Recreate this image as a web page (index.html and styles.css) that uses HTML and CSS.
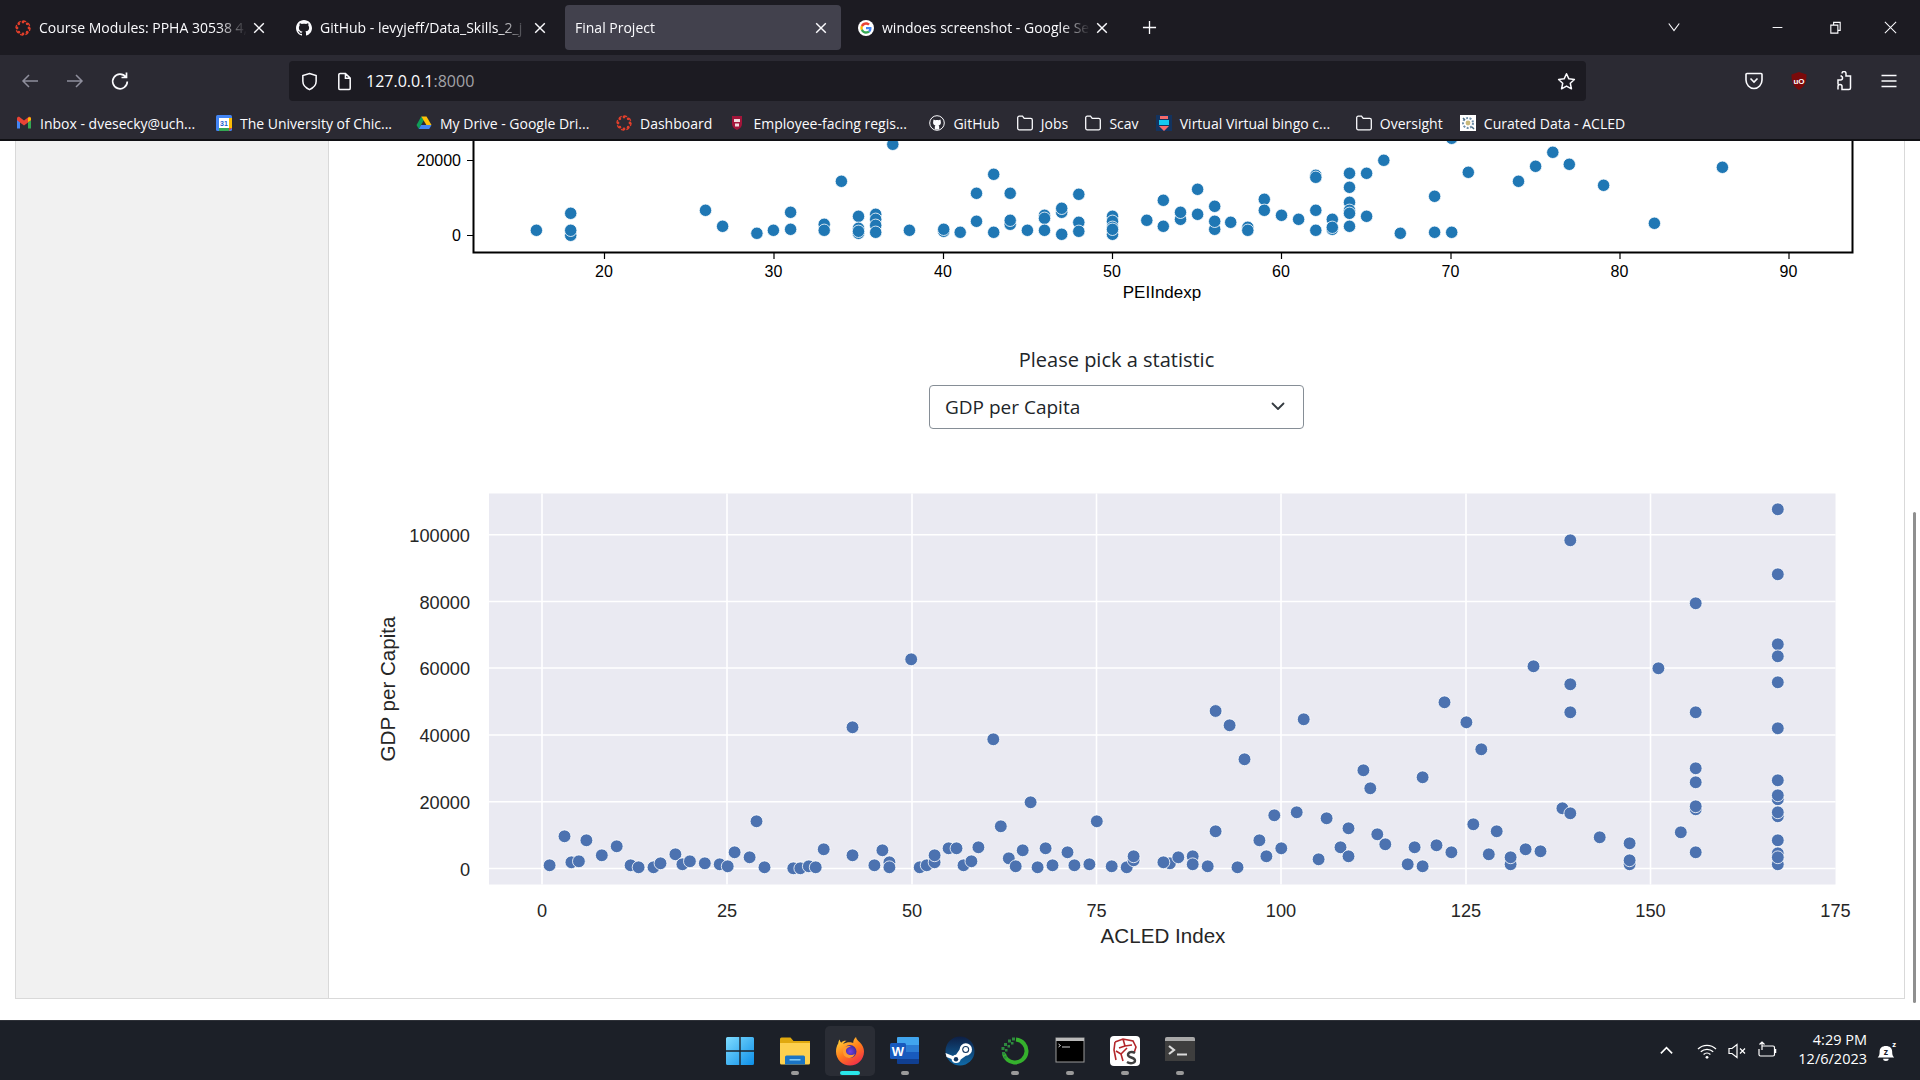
FILE: index.html
```html
<!DOCTYPE html>
<html lang="en">
<head>
<meta charset="utf-8">
<title>Final Project</title>
<link rel="stylesheet" href="styles.css">
</head>
<body>
<svg class="defs" width="0" height="0" aria-hidden="true">
  <defs>
    <symbol id="i-canvas" viewBox="0 0 16 16">
      <g fill="#e13f2b"><circle cx="8" cy="2" r="1.4"/><circle cx="8" cy="14" r="1.4"/><circle cx="2" cy="8" r="1.4"/><circle cx="14" cy="8" r="1.4"/><circle cx="3.800" cy="3.800" r="1.400"/><circle cx="12.200" cy="3.800" r="1.400"/><circle cx="3.800" cy="12.200" r="1.400"/><circle cx="12.200" cy="12.200" r="1.400"/></g>
      <circle cx="8" cy="8" r="7" fill="none" stroke="#e13f2b" stroke-width="1.300" stroke-dasharray="3 2.500"/>
    </symbol>
    <symbol id="i-github" viewBox="0 0 16 16">
      <path fill="#fbfbfe" d="M8 0C3.600 0 0 3.600 0 8c0 3.500 2.300 6.500 5.500 7.600.4.100.5-.2.5-.4v-1.400c-2.200.5-2.700-1-2.700-1-.4-.9-.9-1.200-.9-1.200-.7-.5.100-.5.100-.5.800.1 1.200.8 1.200.8.700 1.200 1.900.9 2.300.7.100-.5.300-.9.500-1.100-1.800-.2-3.600-.9-3.600-4 0-.9.300-1.600.8-2.100-.1-.2-.4-1 .1-2.100 0 0 .7-.2 2.200.8.600-.2 1.300-.3 2-.3s1.400.1 2 .3c1.500-1 2.200-.8 2.200-.8.400 1.100.2 1.900.1 2.100.5.600.8 1.300.8 2.100 0 3.100-1.900 3.700-3.700 3.900.3.300.6.800.6 1.500v2.200c0 .2.100.5.600.4C13.700 14.500 16 11.500 16 8c0-4.400-3.600-8-8-8z"/>
    </symbol>
    <symbol id="i-google" viewBox="0 0 48 48">
      <circle cx="24" cy="24" r="24" fill="#fff"/>
      <path fill="#ea4335" d="M24 14c2.800 0 5 1 6.700 2.600l5-5C32.500 8.700 28.700 7 24 7 17.300 7 11.600 10.800 8.800 16.400l5.800 4.500C16 16.900 19.700 14 24 14z"/>
      <path fill="#4285f4" d="M40.500 24.500c0-1.200-.1-2.300-.3-3.500H24v6.600h9.300c-.4 2.200-1.600 4-3.400 5.200l5.600 4.300c3.200-3 5-7.400 5-12.600z"/>
      <path fill="#fbbc05" d="M14.600 27.100c-.4-1-.6-2-.6-3.100s.2-2.100.6-3.100l-5.800-4.500C7.700 18.700 7 21.300 7 24s.7 5.300 1.800 7.600z"/>
      <path fill="#34a853" d="M24 41c4.600 0 8.500-1.500 11.500-4.400l-5.600-4.300c-1.600 1-3.500 1.700-5.900 1.700-4.300 0-8-2.900-9.400-6.900l-5.800 4.500C11.600 37.200 17.300 41 24 41z"/>
    </symbol>
    <symbol id="i-x" viewBox="0 0 10 10"><path d="M1 1l8 8M9 1L1 9" fill="none" stroke="currentColor" stroke-width="1.200"/></symbol>
    <symbol id="i-folder" viewBox="0 0 16 16"><path d="M.7 2.700A1.500 1.500 0 0 1 2.200 1.200h3.300l1.700 2.200h6.600a1.500 1.500 0 0 1 1.500 1.500v8.400a1.500 1.500 0 0 1-1.500 1.500H2.200a1.500 1.500 0 0 1-1.500-1.500z" fill="none" stroke="#fbfbfe" stroke-width="1.300"/></symbol>
    <symbol id="i-gmail" viewBox="0 0 16 16">
      <path fill="#4285f4" d="M1 4v9.500h3V7z"/><path fill="#34a853" d="M12 7v6.500h3V4z"/><path fill="#ea4335" d="M1 3.500v1.800L8 10.500l7-5.200V3.500C15 2 13.300 1.300 12.200 2.200L8 5.400 3.800 2.200C2.700 1.300 1 2 1 3.500z"/><path fill="#fbbc05" d="M12 3v4l3-2V3.500C15 2.200 13.200 1.500 12 3z"/>
    </symbol>
    <symbol id="i-cal" viewBox="0 0 16 16">
      <rect x="0" y="0" width="16" height="16" rx="1.500" fill="#4285f4"/><rect x="3" y="3" width="10" height="10" fill="#fff"/><path fill="#34a853" d="M3 13h10v3H3z"/><path fill="#ea4335" d="M13 13h3l-3 3z"/><path fill="#fbbc05" d="M13 3h3v10h-3z"/>
      <text x="8" y="11" class="cal-num">31</text>
    </symbol>
    <symbol id="i-drive" viewBox="0 0 16 16">
      <path fill="#0f9d58" d="M5.500 1.500h-.2L.5 10l2.300 4 5-8.700z"/><path fill="#ffc107" d="M5.300 1.500h5.200l5 8.500h-5.100z"/><path fill="#4285f4" d="M2.800 14h10.400l2.300-4H5.100z"/>
    </symbol>
    <symbol id="i-shield-uc" viewBox="0 0 16 16">
      <path fill="#a3153a" d="M3 1h10v8c0 3-2.500 5-5 6-2.500-1-5-3-5-6z"/><path fill="#f2d9dd" d="M5 4h6v3H5zM6 8.500h4v3H6z"/>
    </symbol>
    <symbol id="i-github-ring" viewBox="0 0 16 16">
      <circle cx="8" cy="8" r="7.300" fill="none" stroke="#fbfbfe" stroke-width="1"/><path fill="#fbfbfe" d="M4.500 4.500l1.800.8c1-.3 2.400-.3 3.400 0l1.800-.8.300 2c.6 2.200-.6 3.600-2.200 3.900.5.400.6 1 .6 1.600v2.500H5.800V12c0-.6.100-1.200.6-1.600-1.600-.3-2.800-1.700-2.200-3.900z"/>
    </symbol>
    <symbol id="i-bingo" viewBox="0 0 16 16">
      <rect y="0" width="16" height="16" fill="#13335f"/><path fill="#f56a6a" d="M4 1h8v3H4zM3 11h10L8 16z"/><path fill="#14c8f2" d="M3 5h10v5H3z"/>
    </symbol>
    <symbol id="i-acled" viewBox="0 0 16 16">
      <rect width="16" height="16" fill="#fff"/><circle cx="8" cy="8" r="5" fill="none" stroke="#6f8fa8" stroke-width="2" stroke-dasharray="2 1.500"/><circle cx="8" cy="8" r="2.400" fill="#c9b97a"/><path d="M3 3l2 2M12 12l2 2" stroke="#4c6b80" stroke-width="1.500"/>
    </symbol>
  </defs>
</svg>

<header class="chrome">
  <div class="tabbar">
    <div class="tab">
      <svg class="fav"><use href="#i-canvas"/></svg>
      <span class="tab-title">Course Modules: PPHA 30538 4,</span>
      <svg class="tab-x"><use href="#i-x"/></svg>
    </div>
    <div class="tab">
      <svg class="fav"><use href="#i-github"/></svg>
      <span class="tab-title">GitHub - levyjeff/Data_Skills_2_j</span>
      <svg class="tab-x"><use href="#i-x"/></svg>
    </div>
    <div class="tab tab-active">
      <span class="tab-title">Final Project</span>
      <svg class="tab-x"><use href="#i-x"/></svg>
    </div>
    <div class="tab">
      <svg class="fav"><use href="#i-google"/></svg>
      <span class="tab-title">windoes screenshot - Google Se</span>
      <svg class="tab-x"><use href="#i-x"/></svg>
    </div>
    <svg class="newtab" viewBox="0 0 16 16"><path d="M8 1v14M1 8h14" fill="none" stroke="currentColor" stroke-width="1.400"/></svg>
    <div class="win-controls">
      <svg class="win-ico chevron-all" viewBox="0 0 16 16"><path d="M2 4l6 8 6-8" fill="none" stroke="currentColor" stroke-width="1.300"/></svg>
      <svg class="win-ico win-min" viewBox="0 0 16 16"><path d="M2 8h12" fill="none" stroke="currentColor" stroke-width="1.200"/></svg>
      <svg class="win-ico win-max" viewBox="0 0 16 16"><path d="M3 5.500h7.500V14H3zM6 5.500V2.500h7v8.500h-2.500" fill="none" stroke="currentColor" stroke-width="1.200"/></svg>
      <svg class="win-ico win-close" viewBox="0 0 16 16"><path d="M2 2l12 12M14 2L2 14" fill="none" stroke="currentColor" stroke-width="1.100"/></svg>
    </div>
  </div>

  <div class="navbar">
    <svg class="nav-ico nav-back" viewBox="0 0 20 20"><path d="M18 10H3M9 4l-6 6 6 6" fill="none" stroke="currentColor" stroke-width="1.500"/></svg>
    <svg class="nav-ico nav-fwd" viewBox="0 0 20 20"><path d="M2 10h15M11 4l6 6-6 6" fill="none" stroke="currentColor" stroke-width="1.500"/></svg>
    <svg class="nav-ico nav-reload" viewBox="0 0 20 20"><path d="M15.800 6A7.300 7.300 0 1 0 17.300 10.500M16.500 1.500V6.500H11.500" fill="none" stroke="currentColor" stroke-width="1.700"/></svg>
    <div class="urlbar">
      <svg class="url-ico" viewBox="0 0 20 20"><path d="M10 1.500l7 2.300v6c0 4-3 7-7 8.700-4-1.700-7-4.700-7-8.700v-6z" fill="none" stroke="currentColor" stroke-width="1.600"/></svg>
      <svg class="url-ico url-page" viewBox="0 0 20 20"><path d="M4 3a1.500 1.500 0 0 1 1.500-1.500H11l5 5V17a1.500 1.500 0 0 1-1.500 1.500h-9A1.500 1.500 0 0 1 4 17zM11 1.500V6.500h5" fill="none" stroke="currentColor" stroke-width="1.600"/></svg>
      <span class="url-text">127.0.0.1<span class="url-port">:8000</span></span>
      <svg class="url-ico url-star" viewBox="0 0 20 20"><path d="M10 1.800l2.500 5.400 5.800.7-4.300 4 1.200 5.800L10 14.800l-5.200 2.900L6 11.900l-4.300-4 5.800-.7z" fill="none" stroke="currentColor" stroke-width="1.600" stroke-linejoin="round"/></svg>
    </div>
    <div class="nav-tools">
      <svg class="nav-ico" viewBox="0 0 20 20"><path d="M3 2.500h14a1 1 0 0 1 1 1V9c0 4.500-3.600 8.500-8 8.500S2 13.500 2 9V3.500a1 1 0 0 1 1-1z" fill="none" stroke="currentColor" stroke-width="1.600"/><path d="M6.500 7.500L10 11l3.500-3.500" fill="none" stroke="currentColor" stroke-width="1.600"/></svg>
      <svg class="nav-ico" viewBox="0 0 20 20"><path d="M10 1l7.500 2.500c0 7-1.500 12-7.500 15.500C4 15.500 2.500 10.500 2.500 3.500z" fill="#7a0a0a"/><text x="10" y="12.500" class="ublock">uO</text></svg>
      <svg class="nav-ico" viewBox="0 0 20 20"><path d="M8 2.500a2 2 0 0 1 4 0V5h4.500v12a1.500 1.500 0 0 1-1.500 1.500H8V15.500a2 2 0 0 0-4 0M4 15.500V18.500M4 13.500V9h2.500a2 2 0 0 0 0-4H8" fill="none" stroke="currentColor" stroke-width="1.500"/></svg>
      <svg class="nav-ico" viewBox="0 0 20 20"><path d="M2.500 4.500h15M2.500 10h15M2.500 15.500h15" fill="none" stroke="currentColor" stroke-width="1.700"/></svg>
    </div>
  </div>

  <nav class="bookmarks">
    <a class="bm bm-wide"><svg class="fav"><use href="#i-gmail"/></svg>Inbox - dvesecky@uch...</a>
    <a class="bm bm-wide"><svg class="fav"><use href="#i-cal"/></svg>The University of Chic...</a>
    <a class="bm bm-wide"><svg class="fav"><use href="#i-drive"/></svg>My Drive - Google Dri...</a>
    <a class="bm"><svg class="fav"><use href="#i-canvas"/></svg>Dashboard</a>
    <a class="bm bm-wide"><svg class="fav"><use href="#i-shield-uc"/></svg>Employee-facing regis...</a>
    <a class="bm"><svg class="fav"><use href="#i-github-ring"/></svg>GitHub</a>
    <a class="bm"><svg class="fav"><use href="#i-folder"/></svg>Jobs</a>
    <a class="bm"><svg class="fav"><use href="#i-folder"/></svg>Scav</a>
    <a class="bm bm-wide"><svg class="fav"><use href="#i-bingo"/></svg>Virtual Virtual bingo c...</a>
    <a class="bm"><svg class="fav"><use href="#i-folder"/></svg>Oversight</a>
    <a class="bm"><svg class="fav"><use href="#i-acled"/></svg>Curated Data - ACLED</a>
  </nav>
</header>

<div class="viewport">
  <div class="app">
    <aside class="sidebar"></aside>
    <main class="main">
      <svg class="chart chart-top" viewBox="329 141 1575 175">
        <g id="dots-top" class="dots-top"></g>
        <path class="spine" d="M473.500 141V252.500H1852.500V141"/>
        <path class="tick" d="M467 160.500h6M467 235.500h6M604.500 253v6M774 253v6M943.500 253v6M1112.500 253v6M1281.500 253v6M1451 253v6M1620 253v6M1789 253v6"/>
        <g class="t-top t-end">
          <text x="461" y="166">20000</text>
          <text x="461" y="241">0</text>
        </g>
        <g class="t-top t-mid">
          <text x="604" y="277">20</text>
          <text x="773.500" y="277">30</text>
          <text x="943" y="277">40</text>
          <text x="1112" y="277">50</text>
          <text x="1281" y="277">60</text>
          <text x="1450.500" y="277">70</text>
          <text x="1619.500" y="277">80</text>
          <text x="1788.500" y="277">90</text>
          <text x="1162" y="298" class="t-top-label">PEIIndexp</text>
        </g>
      </svg>

      <label class="stat-label">Please pick a statistic</label>
      <div class="select">
        <span>GDP per Capita</span>
        <svg class="select-caret" viewBox="0 0 16 16"><path d="M2.500 5.500L8 11l5.500-5.500" fill="none" stroke="currentColor" stroke-width="1.800" stroke-linecap="round" stroke-linejoin="round"/></svg>
      </div>

      <svg class="chart chart-bottom" viewBox="329 470 1575 490">
        <rect class="plot-bg" x="489" y="493.500" width="1346.500" height="391"/>
        <path class="grid" d="M542 493.500V884.500M727 493.500V884.500M912 493.500V884.500M1096.500 493.500V884.500M1281 493.500V884.500M1466 493.500V884.500M1650.500 493.500V884.500M489 868.500H1835.500M489 801.800H1835.500M489 735H1835.500M489 668H1835.500M489 601.500H1835.500M489 534.700H1835.500"/>
        <g id="dots-bottom" class="dots-bottom"></g>
        <g class="t-bottom t-end">
          <text x="470" y="876">0</text>
          <text x="470" y="809">20000</text>
          <text x="470" y="742">40000</text>
          <text x="470" y="675">60000</text>
          <text x="470" y="609">80000</text>
          <text x="470" y="542">100000</text>
        </g>
        <g class="t-bottom t-mid">
          <text x="542" y="917">0</text>
          <text x="727" y="917">25</text>
          <text x="912" y="917">50</text>
          <text x="1096.500" y="917">75</text>
          <text x="1281" y="917">100</text>
          <text x="1466" y="917">125</text>
          <text x="1650.500" y="917">150</text>
          <text x="1835.500" y="917">175</text>
          <text x="1163" y="943" class="t-bottom-label">ACLED Index</text>
          <text class="t-bottom-label" transform="translate(395 689) rotate(-90)">GDP per Capita</text>
        </g>
      </svg>
    </main>
  </div>
  <div class="scroll-thumb"></div>
</div>

<footer class="taskbar">
  <div class="task-center">
    <div class="task-item">
      <svg class="task-ico" viewBox="0 0 30 30">
        <defs><linearGradient id="g-win" x1="0" y1="0" x2="1" y2="1"><stop offset="0" stop-color="#7fdcff"/><stop offset="1" stop-color="#0d8fe8"/></linearGradient></defs>
        <path fill="url(#g-win)" d="M1 2.500A1.500 1.500 0 0 1 2.500 1h11.800v13.300H1zM15.700 1h11.800A1.500 1.500 0 0 1 29 2.500v11.800H15.700zM1 15.700h13.300V29H2.500A1.500 1.500 0 0 1 1 27.500zM15.700 15.700H29v11.800a1.500 1.500 0 0 1-1.500 1.500H15.700z"/>
      </svg>
    </div>
    <div class="task-item task-open">
      <svg class="task-ico" viewBox="0 0 30 30">
        <path fill="#e0a80e" d="M0 3a1.500 1.500 0 0 1 1.500-1.500h9l3 3.500H30v6H0z"/>
        <path fill="#fdd04f" d="M0 7h30v20a1.500 1.500 0 0 1-1.500 1.500h-27A1.500 1.500 0 0 1 0 27z"/>
        <path fill="#1a74c4" d="M5 21a1.500 1.500 0 0 1 1.500-1.500h17A1.500 1.500 0 0 1 25 21v7.500H5z"/>
        <path fill="#7ec8f5" d="M9.500 23h11v1.600h-11z"/>
      </svg>
    </div>
    <div class="task-item task-active">
      <svg class="task-ico" viewBox="0 0 30 30">
        <defs>
          <linearGradient id="g-ff" x1=".2" y1="0" x2=".8" y2="1"><stop offset="0" stop-color="#ffd43a"/><stop offset=".5" stop-color="#ff7a1a"/><stop offset="1" stop-color="#f0264f"/></linearGradient>
          <radialGradient id="g-ffc"><stop offset="0" stop-color="#7543e3"/><stop offset="1" stop-color="#3d2a9c"/></radialGradient>
        </defs>
        <path fill="url(#g-ff)" d="M21 1c.500 2.500 2 3.500 4 5.500 2.500 2.800 4 5.500 4 9 0 8-6.300 14-14 14S1 23.500 1 15.500c0-3.500 1-6 2.200-8 .2-1.500.6-3 1.600-4 .1 1.500.6 2.500 1.400 3.200C7.500 5 9.500 4.500 11.500 4.800c-1.500.8-2.800 2-3.300 3.200 3-2 8-2 10-1 0-2.500 1-4.500 2.800-6z"/>
        <circle cx="15" cy="15.500" r="6.500" fill="url(#g-ffc)"/>
        <path fill="#ff9a2e" d="M8 12c2-1.500 5-2.500 8-1.500-2.500.5-4.500 1.500-5 3.500-.5 3 2 5 5 5 1.500 0 3-.5 4-1.500-1 3-3.500 4.500-6 4.500-4 0-7-3.500-6-10z"/>
      </svg>
    </div>
    <div class="task-item task-open">
      <svg class="task-ico" viewBox="0 0 30 30">
        <path fill="#41a5ee" d="M8 1h20a1 1 0 0 1 1 1v7H7V2a1 1 0 0 1 1-1z"/>
        <path fill="#2b7cd3" d="M7 9h22v7H7z"/>
        <path fill="#185abd" d="M7 16h22v7H7z"/>
        <path fill="#103f91" d="M7 23h22v4a1 1 0 0 1-1 1H8a1 1 0 0 1-1-1z"/>
        <rect x="0" y="7" width="16" height="16" rx="1.500" fill="#185abd"/>
        <text x="8" y="20" class="word-w">W</text>
      </svg>
    </div>
    <div class="task-item">
      <svg class="task-ico" viewBox="0 0 30 30">
        <defs><linearGradient id="g-steam" x1="0" y1="0" x2="0" y2="1"><stop offset="0" stop-color="#0e1f45"/><stop offset="1" stop-color="#0f6aa8"/></linearGradient></defs>
        <circle cx="15" cy="15" r="14.500" fill="url(#g-steam)"/>
        <path fill="#fff" d="M.5 17l7.500 3a4.500 4.500 0 0 1 3-1.200l3.600-5.200a6.200 6.200 0 1 1 6.300 6.100L15.700 23.500A4.700 4.700 0 0 1 6.500 23l-5-2z"/>
        <circle cx="20.700" cy="13.500" r="3.500" fill="#11365f"/>
        <circle cx="20.700" cy="13.500" r="2.400" fill="#fff"/>
        <circle cx="11" cy="23.300" r="2.200" fill="#11365f"/>
      </svg>
    </div>
    <div class="task-item task-open">
      <svg class="task-ico" viewBox="0 0 30 30">
        <circle cx="15" cy="15" r="11.500" fill="none" stroke="#35b12d" stroke-width="4" stroke-dasharray="50 22.300" transform="rotate(-85 15 15)"/>
        <g fill="#2d8a3e"><rect x="2" y="16" width="3" height="3"/><rect x="1.500" y="11" width="3" height="3"/><rect x="5" y="13" width="2.500" height="2.500"/><rect x="4" y="7" width="3" height="3"/><rect x="7.500" y="9" width="2.500" height="2.500"/><rect x="8" y="3.500" width="3" height="3"/><rect x="11" y="6" width="2.500" height="2.500"/><rect x="12" y="1.500" width="3" height="3"/><rect x="4" y="20" width="2.500" height="2.500"/></g>
      </svg>
    </div>
    <div class="task-item task-open">
      <svg class="task-ico" viewBox="0 0 30 30">
        <rect x="1" y="2" width="28" height="24" fill="#000" stroke="#9a9a9a" stroke-width="1"/>
        <rect x="1" y="2" width="28" height="3" fill="#b9b9b9"/>
        <path d="M3.500 8l2 1.500-2 1.500M7 11h8" fill="none" stroke="#d0d0d0" stroke-width="1"/>
      </svg>
    </div>
    <div class="task-item task-open">
      <svg class="task-ico" viewBox="0 0 30 30">
        <rect width="30" height="30" rx="4" fill="#fff"/>
        <path d="M5 6l8-3 10 2 3 6-2 6M5 6l-1 8 2 10M13 3l2 7-6 2M15 10l7-1M6 15l5 3 2 7M11 18l6-6" fill="none" stroke="#b3262a" stroke-width="1.600"/>
        <path d="M25 17c-3-2-7-1-7 2 0 3 7 2 7 5.500 0 3-5 3.500-8 1.500" fill="none" stroke="#3f3f3f" stroke-width="2.400"/>
      </svg>
    </div>
    <div class="task-item task-open">
      <svg class="task-ico" viewBox="0 0 30 30">
        <rect x="0" y="1" width="30" height="22" rx="2" fill="#3e3e3e"/>
        <path d="M0 3a2 2 0 0 1 2-2h26a2 2 0 0 1 2 2v2H0z" fill="#a8a8a8"/>
        <rect x="0" y="5" width="30" height="20" fill="#3e3e3e"/>
        <path d="M4 10l5 4-5 4" fill="none" stroke="#dcdcdc" stroke-width="2.200"/>
        <path d="M12 18.500h10" stroke="#dcdcdc" stroke-width="2"/>
      </svg>
    </div>
  </div>
  <div class="tray">
    <svg class="tray-ico tray-chev" viewBox="0 0 16 16"><path d="M2 11l6-6 6 6" fill="none" stroke="currentColor" stroke-width="1.700"/></svg>
    <svg class="tray-ico" viewBox="0 0 20 20"><path d="M1 8a13 13 0 0 1 18 0M3.800 10.800a9 9 0 0 1 12.400 0M6.600 13.500a5 5 0 0 1 6.800 0" fill="none" stroke="currentColor" stroke-width="1.300"/><circle cx="10" cy="16.300" r="1.400" fill="currentColor"/></svg>
    <svg class="tray-ico" viewBox="0 0 20 20"><path d="M2 7.500h3L10 3.500v13l-5-4H2z" fill="none" stroke="currentColor" stroke-width="1.200"/><path d="M13 7.500l5 5M18 7.500l-5 5" fill="none" stroke="currentColor" stroke-width="1.200"/></svg>
    <svg class="tray-ico" viewBox="0 0 20 20"><path d="M5 5h11a1.500 1.500 0 0 1 1.500 1.500v7a1.500 1.500 0 0 1-1.500 1.500H3.500A1.500 1.500 0 0 1 2 13.500V8" fill="none" stroke="currentColor" stroke-width="1.200"/><path d="M5 1v8M2.500 3.500L5 1l2.500 2.500" fill="none" stroke="currentColor" stroke-width="1.200"/><path d="M18.500 8v4" stroke="currentColor" stroke-width="1.500"/></svg>
    <div class="clock"><span>4:29 PM</span><span>12/6/2023</span></div>
    <svg class="tray-ico tray-bell" viewBox="0 0 20 20"><path fill="currentColor" d="M1.500 16c1.500-1.500 1.800-3 1.800-5.500C3.300 7.500 5.500 5.500 9 5.500s5.700 2 5.700 5c0 2.500.3 4 1.800 5.500z"/><path fill="currentColor" d="M6.500 17h5a2.500 2 0 0 1-5 0z"/><text x="9" y="13.500" class="bell-z">z</text><text x="16.500" y="6.500" class="bell-z2">z</text></svg>
  </div>
</footer>
<script src="charts.js"></script>
</body>
</html>
```

FILE: styles.css
```css
* { box-sizing: border-box; }
html, body { margin: 0; height: 100%; }
body {
  display: flex;
  flex-direction: column;
  height: 100vh;
  overflow: hidden;
  background: #fff;
  font-family: "Open Sans", "Noto Sans", sans-serif;
}
.defs { position: absolute; }
svg { display: block; flex: none; }

/* browser chrome */
.chrome { flex: none; color: #fbfbfe; }
.tabbar {
  display: flex;
  align-items: flex-start;
  height: 55px;
  padding: 5px 0 0 3px;
  background: #1c1b22;
}
.tab {
  display: flex;
  align-items: center;
  width: 276px;
  height: 45px;
  margin-right: 5px;
  padding: 0 14px 0 12px;
  border-radius: 4px;
  font-size: 14px;
}
.tab-active { padding-left: 10px; background: #42414d; }
.fav { width: 16px; height: 16px; margin-right: 8px; }
.tab-title {
  flex: 1;
  min-width: 0;
  overflow: hidden;
  white-space: nowrap;
  -webkit-mask-image: linear-gradient(to right, #000 86%, transparent);
  mask-image: linear-gradient(to right, #000 86%, transparent);
}
.tab-x { width: 12px; height: 12px; margin-left: 6px; }
.newtab { width: 15px; height: 15px; margin: 15px 0 0 15px; }
.win-controls {
  margin-left: auto;
  display: flex;
  align-items: center;
  height: 45px;
}
.win-ico { width: 13px; height: 13px; margin-top: -1px; }
.chevron-all { width: 14px; height: 14px; margin-right: 90px; }
.win-min { margin-right: 44px; }
.win-max { margin-right: 40px; width: 15px; height: 15px; }
.win-close { margin-right: 22px; width: 15px; height: 15px; }

.navbar {
  display: flex;
  align-items: center;
  height: 55px;
  padding: 0 21px 3px 20px;
  background: #2b2a33;
}
.nav-ico { width: 20px; height: 20px; }
.nav-back, .nav-fwd { color: #8f8f9d; }
.nav-back { margin-right: 25px; }
.nav-fwd { margin-right: 25px; }
.urlbar {
  display: flex;
  align-items: center;
  width: 1297px;
  height: 40px;
  margin-left: 159px;
  padding: 0 10px 0 11px;
  border-radius: 4px;
  background: #1c1b22;
  font-size: 16px;
}
.url-ico { width: 19px; height: 19px; }
.url-page { margin-left: 16px; }
.url-text { margin-left: 12px; }
.url-port { color: #a3a3a8; }
.url-star { margin-left: auto; }
.nav-tools {
  display: flex;
  gap: 25px;
  margin-left: auto;
}

.bookmarks {
  display: flex;
  align-items: center;
  height: 31px;
  padding: 0 0 3px 7px;
  background: #2b2a33;
  border-bottom: 2px solid #101014;
  font-size: 14px;
}
.bm {
  display: flex;
  flex: none;
  align-items: center;
  padding: 0 8.200px 0 9px;
  white-space: nowrap;
}
.bm-wide { width: 200px; }

/* page */
.viewport {
  flex: 1;
  min-height: 0;
  position: relative;
  padding-left: 15px;
  background: #fff;
}
.app {
  display: flex;
  width: 1890px;
  height: 858px;
  border: 1px solid #d9d9d9;
  border-top: 0;
}
.sidebar {
  flex: none;
  width: 313px;
  background: #f1f1f1;
  border-right: 1px solid #d9d9d9;
}
.main {
  flex: 1;
  min-width: 0;
  display: flex;
  flex-direction: column;
  align-items: center;
  overflow: hidden;
  background: #fff;
}
.chart { width: 1575px; }
.chart-top { height: 175px; }
.chart-bottom { height: 490px; margin-top: 41px; }
.scroll-thumb {
  position: absolute;
  right: 4px;
  top: 371px;
  bottom: 17px;
  width: 3px;
  border-radius: 2px;
  background: #8f8f8f;
}

/* upper chart */
.spine { fill: none; stroke: #000; stroke-width: 2; }
.tick { fill: none; stroke: #000; stroke-width: 1.2; }
.t-top text, .t-bottom text { font-family: "Liberation Sans", Arial, sans-serif; }
.t-top { font-size: 16px; fill: #000; }
.t-top-label { font-size: 17px; }
.t-end { text-anchor: end; }
.t-mid { text-anchor: middle; }
.dots-top circle { fill: #1f77b4; stroke: #fff; stroke-width: .8; }

/* selector */
.stat-label {
  margin-top: 31px;
  height: 26px;
  line-height: 26px;
  font-size: 20px;
  color: #212529;
}
.select {
  display: flex;
  align-items: center;
  justify-content: space-between;
  width: 375px;
  height: 44px;
  margin-top: 12px;
  padding: 0 17px 0 15px;
  border: 1px solid #868e96;
  border-radius: 4px;
  background: #fff;
  font-size: 19px;
  color: #212529;
}
.select-caret { width: 16px; height: 16px; color: #343a40; margin-top: -2px; }

/* lower chart */
.plot-bg { fill: #eaeaf2; }
.grid { fill: none; stroke: #fff; stroke-width: 1.6; }
.t-bottom { font-size: 18.200px; fill: #262626; }
.t-bottom-label { font-size: 20.600px; }
.dots-bottom circle { fill: #4c72b0; stroke: #fff; stroke-width: .8; }

/* icon text */
.cal-num { font: 700 7px "Liberation Sans", sans-serif; fill: #1a5fd0; text-anchor: middle; }
.ublock { font: 700 8px "Liberation Sans", sans-serif; fill: #fff; text-anchor: middle; }
.word-w { font: 700 13px "Liberation Sans", sans-serif; fill: #fff; text-anchor: middle; }
.bell-z { font: 700 8px "Open Sans", sans-serif; fill: #1c2028; text-anchor: middle; }
.bell-z2 { font: 700 7px "Open Sans", sans-serif; fill: #fff; text-anchor: middle; }

/* taskbar */
.taskbar {
  flex: none;
  display: grid;
  grid-template-columns: 1fr auto 1fr;
  align-items: center;
  height: 60px;
  background: #1c2028;
  border-top: 1px solid #2e3138;
  color: #fff;
}
.task-center { grid-column: 2; display: flex; gap: 5px; }
.task-item {
  position: relative;
  display: flex;
  align-items: center;
  justify-content: center;
  width: 50px;
  height: 50px;
  border-radius: 5px;
}
.task-ico { width: 30px; height: 30px; }
.task-active { background: #2a2d35; }
.task-open::after, .task-active::after {
  content: "";
  position: absolute;
  bottom: 1px;
  left: 50%;
  width: 8px;
  height: 4px;
  margin-left: -4px;
  border-radius: 2px;
  background: #9a9a9a;
}
.task-active::after { width: 20px; margin-left: -10px; background: #29e6ea; }
.tray {
  grid-column: 3;
  justify-self: end;
  display: flex;
  align-items: center;
  padding-right: 22px;
}
.tray-ico { width: 20px; height: 20px; margin-right: 10px; }
.tray-chev { width: 15px; height: 15px; margin-right: 23px; }
.clock {
  display: flex;
  flex-direction: column;
  align-items: flex-end;
  margin-left: 11px;
  padding-bottom: 3px;
  font-size: 14.500px;
  line-height: 19px;
}
.tray-bell { width: 22px; height: 22px; margin: 0 0 0 9px; }
```

FILE: charts.js
```js
// Scatter points as read from the two figures: [x, y] in screen pixels of the source crops.
var SVG_NS = "http://www.w3.org/2000/svg";

function plot(groupId, originX, originY, scaleX, points, radius) {
  var group = document.getElementById(groupId);
  points.forEach(function (p) {
    var c = document.createElementNS(SVG_NS, "circle");
    c.setAttribute("cx", (originX + p[0] / scaleX).toFixed(1));
    c.setAttribute("cy", (originY + p[1] / 3).toFixed(1));
    c.setAttribute("r", radius);
    group.appendChild(c);
  });
}

plot("dots-top", 0, 130, 1.633, [
  [876,301],[932,250],[932,316],[932,301],[1152,241],[1180,289],[1236,310],[1263,301],[1291,247],[1291,298],
  [1346,283],[1346,301],[1374,154],[1402,259],[1402,310],[1402,295],[1402,304],[1430,253],[1430,268],[1430,286],
  [1430,307],[1458,43],[1485,301],[1541,304],[1541,298],[1568,307]
], 6.2);

plot("dots-top", 960, 130, 1.633, [
  [27,190],[27,274],[55,133],[55,307],[82,190],[82,283],[82,271],[110,301],[138,256],[138,265],[138,301],
  [166,247],[166,235],[166,313],[194,193],[194,277],[194,304],[249,259],[249,274],[249,313],[249,292],[249,298],
  [305,271],[332,211],[332,289],[360,268],[360,247],[388,178],[388,253],[416,229],[416,298],[416,274],[442,277],
  [470,292],[470,301],[497,208],[497,241],[525,256],[553,268],[581,136],[581,142],[581,241],[581,301],
  [608,268],[608,298],[608,292],[636,130],[636,172],[636,217],[636,241],[636,250],[636,289],[664,130],[664,259],
  [692,91],[719,310],[775,199],[775,307],[803,25],[803,307],[830,127],[912,154],[940,109],[968,67],[995,103],
  [1051,166],[1134,280],[1245,112]
], 6.2);

plot("dots-bottom", 360, 480, 2.01, [
  [381,1156],[411,1069],[425,1147],[440,1144],[455,1081],[486,1126],[516,1099],[544,1156],[560,1162],[590,1162],
  [604,1150],[634,1123],[648,1153],[663,1144],[693,1150],[723,1153],[739,1159],[753,1117],[783,1132],[797,1024],
  [813,1162],[871,1165],[885,1165],[902,1159],[916,1162],[932,1108],[990,742],[990,1126],[1034,1156],[1050,1111],
  [1064,1147],[1064,1162],[1108,538],[1125,1162],[1139,1156],[1155,1147],[1155,1126],[1183,1105],[1199,1105],
  [1213,1156],[1229,1144],[1243,1102],[1273,778],[1288,1039],[1304,1135],[1318,1159],[1332,1111],[1348,967],
  [1362,1162],[1378,1105],[1392,1156],[1422,1117],[1436,1156],[1466,1153],[1481,1024],[1511,1159],[1541,1162],
  [1555,1141],[1555,1129]
], 6.4);

plot("dots-bottom", 1140, 480, 2.01, [
  [60,1150],[47,1147],[77,1132],[106,1129],[106,1153],[136,1159],[152,693],[152,1054],[180,736],[196,1162],[210,838],
  [240,1081],[254,1129],[270,1006],[284,1105],[315,997],[329,718],[359,1138],[375,1015],[403,1102],[419,1045],
  [419,1129],[449,871],[463,925],[477,1063],[493,1093],[538,1153],[552,1102],[568,892],[568,1159],[596,1096],
  [612,667],[626,1117],[656,727],[670,1033],[686,808],[701,1123],[717,1054],[745,1153],[745,1132],[775,1108],
  [791,559],[805,1114],[849,985],[865,181],[865,613],[865,697],[865,1000],[924,1072],[984,1090],[984,1153],
  [984,1141],[1042,565],[1087,1057],[1117,370],[1117,697],[1117,865],[1117,907],[1117,988],[1117,979],[1117,1117],
  [1282,88],[1282,283],[1282,493],[1282,529],[1282,607],[1282,745],[1282,901],[1282,958],[1282,946],[1282,1009],
  [1282,997],[1282,1081],[1282,1153],[1282,1120],[1282,1132]
], 6.4);
```
